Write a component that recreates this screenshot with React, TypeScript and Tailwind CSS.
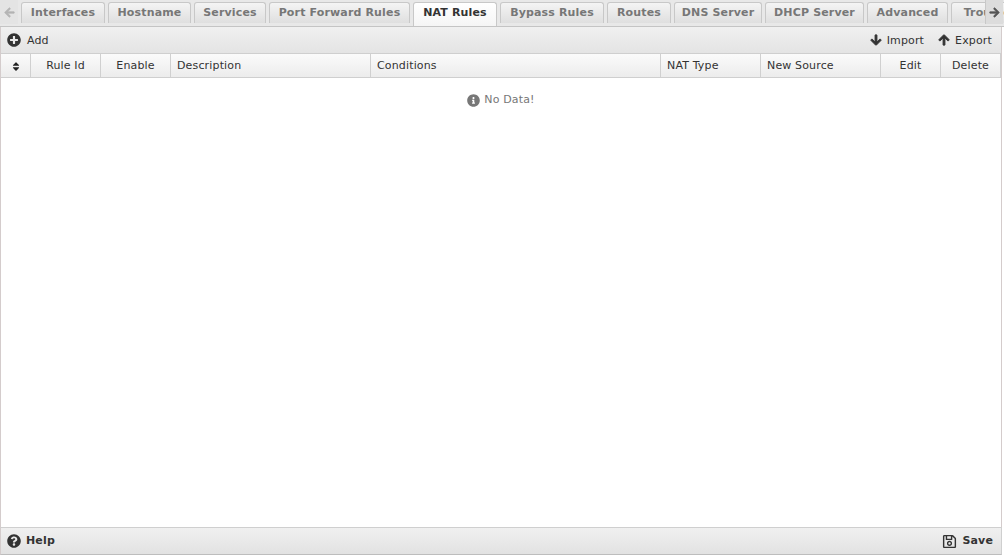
import { FaArrowDown, FaArrowLeft, FaArrowRight, FaArrowUp, FaInfoCircle, FaPlusCircle, FaQuestionCircle, FaRegSave, FaSort } from 'react-icons/fa'

const tabs = [
  { label: 'Interfaces', width: 'w-[84px]' },
  { label: 'Hostname', width: 'w-[83px]' },
  { label: 'Services', width: 'w-[72px]' },
  { label: 'Port Forward Rules', width: 'w-[141px]' },
  { label: 'NAT Rules', width: 'w-[84px]', active: true },
  { label: 'Bypass Rules', width: 'w-[104px]' },
  { label: 'Routes', width: 'w-[64px]' },
  { label: 'DNS Server', width: 'w-[88px]' },
  { label: 'DHCP Server', width: 'w-[99px]' },
  { label: 'Advanced', width: 'w-[81px]' },
  { label: 'Troubleshooting', width: 'w-[128px]' },
]

const columns = [
  { label: '', width: 'w-[30px]', align: 'justify-center' },
  { label: 'Rule Id', width: 'w-[70px]', align: 'justify-center' },
  { label: 'Enable', width: 'w-[70px]', align: 'justify-center' },
  { label: 'Description', width: 'w-[200px]', align: 'justify-start' },
  { label: 'Conditions', width: 'w-[290px]', align: 'justify-start' },
  { label: 'NAT Type', width: 'w-[100px]', align: 'justify-start' },
  { label: 'New Source', width: 'w-[120px]', align: 'justify-start' },
  { label: 'Edit', width: 'w-[60px]', align: 'justify-center' },
  { label: 'Delete', width: 'w-[60px]', align: 'justify-center' },
]

function Tab({ label, width, active }: { label: string; width: string; active?: boolean }) {
  return (
    <div
      className={`${width} shrink-0 mr-[3px] flex items-center justify-center rounded-t-[3px] border border-b-0 border-[#c8c8c8] font-bold whitespace-nowrap ${
        active
          ? 'h-[24px] pb-[3px] bg-gradient-to-b from-white to-[#f5f5f5] text-[#333]'
          : 'h-[21px] bg-gradient-to-b from-[#f4f4f4] to-[#dfdfdf] text-[#777]'
      }`}
    >
      {label}
    </div>
  )
}

export default function App() {
  return (
    <div className="w-[1004px] h-[555px] overflow-hidden bg-white flex flex-col font-['DejaVu_Sans',sans-serif] text-[11px] tracking-[0.15px] text-[#333]">
      <div className="relative h-[27px] shrink-0 bg-[#e8e8e8] border-b border-[#c4c4c4] overflow-hidden">
        <div className="flex items-start h-[26px] pl-[21px] pt-[2px]">
          {tabs.map((tab) => (
            <Tab key={tab.label} {...tab} />
          ))}
        </div>
        <div className="absolute left-0 top-0 w-[18px] h-[24px] flex items-center justify-center bg-[#e4e4e4] text-[#b5b5b5]">
          <FaArrowLeft className="w-[11px] h-[11px]" strokeWidth={30} />
        </div>
        <div className="absolute right-[1px] top-0 w-[18px] h-[24px] flex items-center justify-center bg-[#dcdcdc] border-l border-[#c8c8c8] text-[#555]">
          <FaArrowRight className="w-[11px] h-[11px]" strokeWidth={30} />
        </div>
      </div>

      <div className="flex-1 flex flex-col w-[1002px] border-x border-x-[#d4cccc] min-h-0">
        <div className="h-[27px] shrink-0 flex items-center justify-between pl-[6px] pr-[9px] bg-gradient-to-b from-[#f0f0f0] to-[#e4e4e4] border-b border-[#cfcfcf]">
          <div className="flex items-center gap-[6px]">
            <FaPlusCircle className="w-[14px] h-[14px] text-[#333]" />
            <span className="pt-[2px]">Add</span>
          </div>
          <div className="flex items-center">
            <FaArrowDown className="w-[12px] h-[12px] text-[#333] mr-[5px]" strokeWidth={40} />
            <span className="mr-[14px] pt-[2px]">Import</span>
            <FaArrowUp className="w-[12px] h-[12px] text-[#333] mr-[5px]" strokeWidth={40} />
            <span className="pt-[2px]">Export</span>
          </div>
        </div>

        <div className="h-[24px] shrink-0 flex bg-gradient-to-b from-[#fbfbfb] to-[#ececec] border-b border-[#cfcfcf]">
          {columns.map((col, i) => (
            <div key={i} className={`${col.width} shrink-0 flex items-center px-[6px] pt-[1px] border-r border-[#d0d0d0] ${col.align}`}>
              {i === 0 ? <FaSort className="w-[10px] h-[11px] text-[#222]" /> : col.label}
            </div>
          ))}
        </div>

        <div className="flex-1 bg-white flex justify-center items-start pt-[14px] text-[#777]">
          <div className="flex items-center gap-[4px] h-[16px]">
            <FaInfoCircle className="w-[13px] h-[13px] text-[#777]" />
            <span>No Data!</span>
          </div>
        </div>
      </div>

      <div className="w-[1002px] h-[28px] shrink-0 flex items-center justify-between pl-[6px] pr-[8px] bg-gradient-to-b from-[#f0f0f0] to-[#e2e2e2] border border-[#cfcfcf] border-l-[#d4cccc] border-b-[#bdbdbd] font-bold">
        <div className="flex items-center gap-[5px]">
          <FaQuestionCircle className="w-[14px] h-[14px] text-[#333]" />
          <span>Help</span>
        </div>
        <div className="flex items-center gap-[5px]">
          <FaRegSave className="w-[15px] h-[15px] text-[#333]" />
          <span>Save</span>
        </div>
      </div>
    </div>
  )
}
